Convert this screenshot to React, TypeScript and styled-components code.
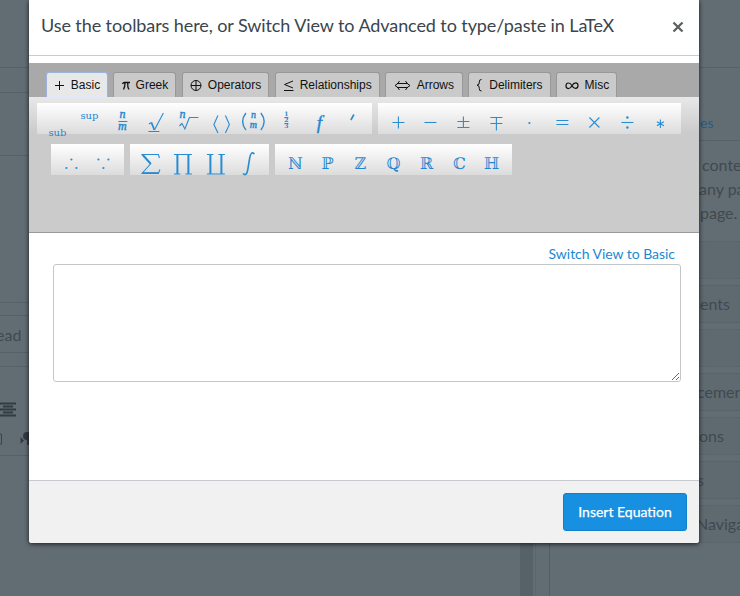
import React from "react";
import styled, { createGlobalStyle, css } from "styled-components";

const GlobalStyle = createGlobalStyle`
  * { box-sizing: border-box; }
  body { margin: 0; overflow: hidden; background: #626d73; font-family: Lato, "Liberation Sans", sans-serif; }
`;

const Screen = styled.div`
  position: relative;
  width: 740px;
  height: 596px;
  overflow: hidden;
  background: #626d73;
`;

const Page = styled.div`
  display: grid;
  grid-template-columns: 520px 13px 207px;
  height: 100%;
  color: #40494f;
`;

const Column = styled.div`
  display: flex;
  flex-direction: column;
  overflow: hidden;
`;

const Band = styled.div<{ $h: number }>`
  flex: none;
  display: flex;
  align-items: center;
  height: ${(p) => p.$h}px;
  border-bottom: 1px solid #566168;
  font-size: 16px;
`;

const Gutter = styled.div`
  background: #566168;
`;

const Clipped = styled.span`
  margin-left: -4px;
`;

const EditorTools = styled.div`
  flex: none;
  display: flex;
  flex-direction: column;
  gap: 15px;
  height: 89px;
  padding-top: 35px;
  border-bottom: 1px solid #566168;
  svg { display: block; }
`;

const Sidebar = styled(Column)`
  flex: 1;
  margin-left: 2px;
  padding-left: 14px;
  border-left: 1px solid #5b666d;
`;

const SideLink = styled.div`
  flex: none;
  height: 73px;
  margin-left: -14px;
  padding: 46px 0 0 164px;
  border-bottom: 1px solid #566168;
  font-size: 14px;
  line-height: 18px;
  color: #285b82;
`;

const SideBody = styled.div`
  flex: 1;
  margin-left: -1px;
  border-left: 1px solid #535e65;
`;

const SideText = styled.div`
  height: 100px;
  padding-top: 12px;
  font-size: 16px;
  line-height: 24px;
  white-space: nowrap;
`;

const SideLine = styled.div<{ $x: number }>`
  padding-left: ${(p) => p.$x}px;
`;

const SideList = styled.div`
  display: flex;
  flex-direction: column;
  gap: 6px;
`;

const SideItem = styled.div<{ $x?: number }>`
  height: 38px;
  padding-left: ${(p) => p.$x ?? 0}px;
  border: solid #59646b;
  border-width: 1px 0;
  background: #5f6a70;
  font-size: 16px;
  line-height: 36px;
  white-space: nowrap;
`;

const Dialog = styled.section`
  position: absolute;
  top: 0;
  left: 29px;
  display: flex;
  flex-direction: column;
  width: 670px;
  height: 543px;
  background: #fff;
  border-radius: 0 0 3px 3px;
  box-shadow: 0 1px 5px rgba(0, 0, 0, 0.75);
`;

const Header = styled.header`
  flex: none;
  display: flex;
  align-items: center;
  justify-content: space-between;
  height: 56px;
  padding: 0 15px 3px 12px;
  border-bottom: 1px solid #c9ccce;
`;

const Title = styled.h1`
  margin: -2px 0 0;
  font-size: 18px;
  font-weight: 400;
  letter-spacing: -0.09px;
  line-height: 24px;
  color: #3a454e;
  white-space: nowrap;
`;

const Close = styled.button`
  display: flex;
  padding: 2px 0 0;
  border: 0;
  background: none;
`;

const Tabs = styled.nav`
  flex: none;
  display: flex;
  align-items: flex-end;
  gap: 5.4px;
  height: 34px;
  margin-top: 7px;
  padding-left: 17px;
  background: #a9a9a9;
`;

const Tab = styled.button<{ $w: number; $active?: boolean }>`
  display: flex;
  align-items: center;
  justify-content: center;
  gap: 6px;
  flex: none;
  width: ${(p) => p.$w}px;
  height: 25px;
  padding: 0;
  border: 1px solid #989898;
  border-bottom: 0;
  border-radius: 3px 3px 0 0;
  background: #cacaca;
  color: #111;
  font: 12px "Liberation Sans", Arial, sans-serif;
  white-space: nowrap;
  svg { display: block; flex: none; }
  ${(p) =>
    p.$active &&
    css`
      background: #e8e8e8;
      border-color: #9db2dc;
      box-shadow: inset 0 0 1px 1px #dfe9fb;
    `}
`;

const Toolbars = styled.div`
  flex: none;
  display: flex;
  flex-direction: column;
  gap: 10px;
  height: 136px;
  padding-top: 6px;
  background: linear-gradient(#e8e8e8, #cbcbcb 36px);
  border-bottom: 1px solid #9b9b9b;
`;

const ToolRow = styled.div<{ $indent: number }>`
  display: flex;
  gap: 6px;
  padding-left: ${(p) => p.$indent}px;
`;

const Group = styled.div<{ $w: number }>`
  display: flex;
  width: ${(p) => p.$w}px;
  height: 31px;
  padding-left: 3.6px;
  background: linear-gradient(#fff, #dcdcdc);
`;

const Symbol = styled.svg`
  flex: none;
  display: block;
  width: 32.8px;
  height: 31px;
  overflow: visible;
  fill: none;
  stroke: #2a8cd0;
  stroke-width: 1.1;
  text {
    fill: #1f87d0;
    stroke: none;
    text-anchor: middle;
    font-family: "DejaVu Serif", serif;
  }
  .math { font-family: "Liberation Serif", serif; font-style: italic; fill: #1f87d0; stroke: #1f87d0; stroke-width: 0.4px; }
  .dot { fill: #2a8cd0; stroke: none; }
`;

const Body = styled.div`
  flex: 1;
  display: flex;
  flex-direction: column;
  padding: 11px 18px 0 24px;
`;

const SwitchLink = styled.a`
  align-self: flex-end;
  margin: 0 6px 1px 0;
  font-size: 14px;
  letter-spacing: -0.04px;
  line-height: 19px;
  color: #1c88d2;
`;

const Field = styled.textarea`
  width: 628px;
  height: 118px;
  border: 1px solid #c3c7ca;
  border-radius: 3px;
  background: #fff;
  resize: vertical;
`;

const Footer = styled.footer`
  flex: none;
  display: flex;
  justify-content: flex-end;
  align-items: center;
  height: 63px;
  padding-right: 12px;
  border-top: 1px solid #c6cace;
  border-radius: 0 0 3px 3px;
  background: #f1f1f1;
`;

const Insert = styled.button`
  width: 124px;
  height: 38px;
  padding: 0 0 2px;
  border: 1px solid #117fcb;
  border-radius: 3px;
  background: #1790e1;
  color: #fff;
  font: 14px Lato, sans-serif;
  -webkit-text-stroke: 0.25px #fff;
`;

const icon = (w: number, children: React.ReactNode) => (
  <svg width={w} height="14" viewBox={`0 0 ${w} 14`} fill="none" stroke="#111" strokeWidth="1">
    {children}
  </svg>
);

const tabs: { label: string; w: number; mark: React.ReactNode }[] = [
  { label: "Basic", w: 62, mark: icon(11, <path d="M1 7.5H10M5.5 3V12" />) },
  { label: "Greek", w: 63, mark: icon(8, <path d="M.5 6Q1 4.5 2.5 4.5H8M3 5Q3 9 1.5 11.5M5.8 5Q5.500 11 7.3 11" strokeWidth="1.3" />) },
  { label: "Operators", w: 87.5, mark: icon(12, <path d="M1 7.5A5 5 0 1 0 11 7.5A5 5 0 1 0 1 7.5ZM6 2.5V12.5M1 7.5H11" />) },
  { label: "Relationships", w: 105, mark: icon(11, <path d="M10 3L1.5 6.5L10 10M1 12.5H10.5" />) },
  { label: "Arrows", w: 77.5, mark: icon(17, <path d="M3 5.5H14M3 9.5H14M5.5 3Q4 6 1 7.5Q4 9 5.5 12M11.5 3Q13 6 16 7.5Q13 9 11.5 12" />) },
  { label: "Delimiters", w: 83, mark: icon(7, <path d="M5.5 1.5Q3 1.5 3.3 4Q3.6 7 1 7.2Q3.6 7.4 3.3 10.5Q3 13 5.5 13" />) },
  { label: "Misc", w: 61, mark: icon(14, <path d="M7 7.7C5 4 1 4.2 1 7.8S5 11.500 7 7.7S13 4 13 7.500S9 11.500 7 7.7Z" strokeWidth="1.2" />) },
];

const structures = [
  <text y="33" fontSize="10" textLength="18" lengthAdjust="spacingAndGlyphs">sub</text>,
  <text y="16" fontSize="10" textLength="18" lengthAdjust="spacingAndGlyphs">sup</text>,
  <><text className="math" y="15" fontSize="12">n</text><path d="M-4 18.5H5" /><text className="math" y="27" fontSize="12">m</text></>,
  <><path d="M-6.5 21L-4 19.5" /><path d="M-4 19.5L-1 27" strokeWidth="1.8" /><path d="M-1 27L8 10M-7 28.5H4" /></>,
  <><text className="math" x="-6" y="15" fontSize="12">n</text><path d="M-9 23L-6.5 20.5L-3.5 26L1 14.5H10" /></>,
  <path d="M-3.5 12.5L-7.5 21.5L-3.5 30M4 12.5L8 21.5L4 30" />,
  <><path d="M-7.5 10Q-14 18.5-7.5 27M7.5 10Q14 18.5 7.5 27" strokeWidth="1.4" /><text className="math" y="15.5" fontSize="10">n</text><text className="math" y="25.5" fontSize="10">m</text></>,
  <><text y="13.5" fontSize="6" fontWeight="700">1</text><path d="M-2 14.5H2M-2 20.5H2" /><text y="19.5" fontSize="6" fontWeight="700">2</text><text y="25.500" fontSize="6" fontWeight="700">3</text></>,
  <text className="math" x="0" y="26" fontSize="19">f</text>,
  <path d="M-1.5 17L1.5 11.5" strokeWidth="1.6" />,
];

const operators = [
  <path d="M-6 19.5H6M0 13.5V25.5" />,
  <path d="M-6 19.5H6" />,
  <path d="M-6 18.5H6M0 13.5V24M-6 24.5H6" />,
  <path d="M-6 14.5H6M-6 20.5H6M0 14.5V27.5" />,
  <circle className="dot" cy="20" r="1.1" />,
  <path d="M-6 17.5H6M-6 21.5H6" />,
  <path d="M-5 14.5L5 24.5M5 14.5L-5 24.5" />,
  <><path d="M-6 19.5H6" /><circle className="dot" cy="14.5" r="1.2" /><circle className="dot" cy="24.5" r="1.2" /></>,
  <path d="M0 16.5V25M-3.5 18.7L3.5 22.7M3.5 18.7L-3.5 22.7" />,
];

const logic = [
  [[0, 15.5], [-5, 24], [5, 24]],
  [[-5, 15.5], [5, 15.5], [0, 24]],
].map((dots) => dots.map(([x, y]) => <circle className="dot" key={`${x},${y}`} cx={x} cy={y} r="1.1" />));

const bigOperators = [
  <><path d="M9 14L8 10.5H-9M-9 29.5H8L9.5 25.5M-8.5 29.5L0 20" /><path d="M-8 10.5L.5 20" strokeWidth="2" /><path d="M-8 29H8" strokeWidth="1.8" /></>,
  <><path d="M-8.500 10.5H9.500M-8.500 30H-2M3 30H9.500" /><path d="M-5 10V30M6 10V30" strokeWidth="2" /></>,
  <><path d="M-8.500 10.5H-2M3 10.5H9.500M-8.500 30H9.500" /><path d="M-5 10V30M6 10V30" strokeWidth="2" /></>,
  <path d="M6 10Q2.500 6.5 1.300 14L-.5 25Q-1.700 33-5.500 29.5" strokeWidth="1.6" />,
];

const sets = ["ℕ", "ℙ", "ℤ", "ℚ", "ℝ", "ℂ", "ℍ"].map((s) => (
  <text y="25" fontSize="16">{s}</text>
));

const ToolGroup = ({ width, items }: { width: number; items: React.ReactNode[] }) => (
  <Group $w={width}>
    {items.map((item, i) => (
      <Symbol key={i} viewBox="-16.4 0 32.8 31">{item}</Symbol>
    ))}
  </Group>
);

export default function App() {
  return (
    <Screen>
      <GlobalStyle />
      <Page>
        <Column>
          <Band $h={68} />
          <Band $h={25} />
          <Band $h={63} />
          <Band $h={147} />
          <Band $h={13} />
          <Band $h={37}><Clipped>ead</Clipped></Band>
          <Band $h={14} />
          <EditorTools>
            <svg width="16" height="15" stroke="#303b42" strokeWidth="2"><path d="M0 1.5H16M3 4.5H13M0 7.5H16M3 10.5H13M0 13.5H16" /></svg>
            <svg width="40" height="16" fill="#303b42"><path d="M0 2H1.500V12H0" fill="none" stroke="#39444b" /><path d="M20.500 5L24 8.500L20.500 12Z" /><path d="M32 0H27A4 4 0 0 0 27 8V13H29V2H30V13H32Z" /></svg>
          </EditorTools>
        </Column>
        <Gutter />
        <Column>
          <Band $h={68} />
          <Sidebar>
            <SideLink>es</SideLink>
            <SideBody>
              <SideText>
                <SideLine $x={152}>conte</SideLine>
                <SideLine $x={149}>any pa</SideLine>
                <SideLine $x={150}>page.</SideLine>
              </SideText>
              <SideList>
                <SideItem />
                <SideItem $x={150}>ents</SideItem>
                <SideItem />
                <SideItem $x={147}>cemen</SideItem>
                <SideItem $x={149}>ons</SideItem>
                <SideItem $x={147}>s</SideItem>
                <SideItem $x={146}>Naviga</SideItem>
              </SideList>
            </SideBody>
          </Sidebar>
        </Column>
      </Page>
      <Dialog>
        <Header>
          <Title>Use the toolbars here, or Switch View to Advanced to type/paste in LaTeX</Title>
          <Close aria-label="Close">
            <svg width="12" height="12" stroke="#5d6060" strokeWidth="2.3"><path d="M1.500 1.500L10.500 10.500M10.500 1.500L1.500 10.500" /></svg>
          </Close>
        </Header>
        <Tabs>
          {tabs.map((t, i) => (
            <Tab key={t.label} $w={t.w} $active={i === 0}>{t.mark}{t.label}</Tab>
          ))}
        </Tabs>
        <Toolbars>
          <ToolRow $indent={8}>
            <ToolGroup width={335} items={structures} />
            <ToolGroup width={303} items={operators} />
          </ToolRow>
          <ToolRow $indent={22}>
            <ToolGroup width={73} items={logic} />
            <ToolGroup width={139} items={bigOperators} />
            <ToolGroup width={237} items={sets} />
          </ToolRow>
        </Toolbars>
        <Body>
          <SwitchLink>Switch View to Basic</SwitchLink>
          <Field />
        </Body>
        <Footer><Insert>Insert Equation</Insert></Footer>
      </Dialog>
    </Screen>
  );
}
